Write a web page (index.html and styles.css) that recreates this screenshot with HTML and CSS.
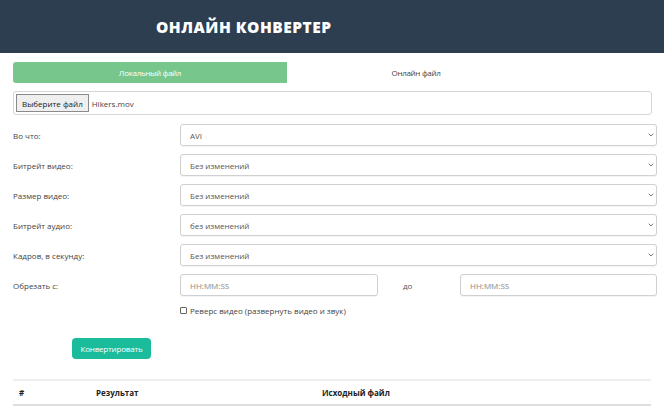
FILE: index.html
```html
<!DOCTYPE html>
<html lang="ru">
<head>
<meta charset="utf-8">
<title>Онлайн конвертер</title>
<link rel="stylesheet" href="styles.css">
</head>
<body>
<header class="top">
  <h1 class="title">ОНЛАЙН КОНВЕРТЕР</h1>
</header>
<main class="wrap">
  <div class="tabs">
    <div class="tab tab-active">Локальный файл</div>
    <div class="tab tab-online">Онлайн файл</div>
  </div>
  <div class="filebox">
    <span class="filebtn">Выберите файл</span>
    <span class="filename">Hikers.mov</span>
  </div>
  <div class="form">
    <div class="row">
      <label class="lbl">Во что:</label>
      <div class="selwrap"><select class="sel"><option>AVI</option></select><svg class="chev" viewBox="0 0 6 4" width="6" height="4"><path d="M0.7 0.7 L3 3 L5.3 0.7" fill="none" stroke="#777" stroke-width="1"/></svg></div>
    </div>
    <div class="row">
      <label class="lbl">Битрейт видео:</label>
      <div class="selwrap"><select class="sel"><option>Без изменений</option></select><svg class="chev" viewBox="0 0 6 4" width="6" height="4"><path d="M0.7 0.7 L3 3 L5.3 0.7" fill="none" stroke="#777" stroke-width="1"/></svg></div>
    </div>
    <div class="row">
      <label class="lbl">Размер видео:</label>
      <div class="selwrap"><select class="sel"><option>Без изменений</option></select><svg class="chev" viewBox="0 0 6 4" width="6" height="4"><path d="M0.7 0.7 L3 3 L5.3 0.7" fill="none" stroke="#777" stroke-width="1"/></svg></div>
    </div>
    <div class="row">
      <label class="lbl">Битрейт аудио:</label>
      <div class="selwrap"><select class="sel"><option>без изменений</option></select><svg class="chev" viewBox="0 0 6 4" width="6" height="4"><path d="M0.7 0.7 L3 3 L5.3 0.7" fill="none" stroke="#777" stroke-width="1"/></svg></div>
    </div>
    <div class="row">
      <label class="lbl">Кадров, в секунду:</label>
      <div class="selwrap"><select class="sel"><option>Без изменений</option></select><svg class="chev" viewBox="0 0 6 4" width="6" height="4"><path d="M0.7 0.7 L3 3 L5.3 0.7" fill="none" stroke="#777" stroke-width="1"/></svg></div>
    </div>
    <div class="row">
      <label class="lbl">Обрезать с:</label>
      <div class="times">
        <input class="inp inp-from" type="text" placeholder="HH:MM:SS">
        <span class="to">до</span>
        <input class="inp inp-to" type="text" placeholder="HH:MM:SS">
      </div>
    </div>
    <div class="row row-check">
      <span class="lbl"></span>
      <label class="check"><span class="box"></span>Реверс видео (развернуть видео и звук)</label>
    </div>
  </div>
  <div class="actions">
    <button class="btn">Конвертировать</button>
  </div>
  <table class="results">
    <thead>
      <tr><th class="c-num">#</th><th class="c-res">Результат</th><th class="c-src">Исходный файл</th></tr>
    </thead>
  </table>
</main>
</body>
</html>
```

FILE: styles.css
```css
* { box-sizing: border-box; }
html, body { margin: 0; padding: 0; background: #fff; }
body {
  font-family: "Open Sans", "Noto Sans", sans-serif;
  font-size: 8px;
  color: #333;
}
.top {
  background: #2c3e50;
  height: 53px;
  display: flex;
  align-items: center;
  padding-left: 156px;
}
.title {
  margin: 0;
  color: #fff;
  font-family: "Open Sans", sans-serif;
  font-weight: 800;
  font-size: 15.5px;
  letter-spacing: 0.5px;
}
.wrap {
  padding: 9px 7px 0 13px;
}
.tabs {
  display: flex;
  height: 21px;
  width: 638px;
}
.tab {
  display: flex;
  align-items: center;
  justify-content: center;
  font-size: 8px;
  color: #444;
  letter-spacing: -0.3px;
}
.tab-active {
  flex: 0 0 274px;
  background: #77c68b;
  color: #fff;
  border-radius: 3px 0 0 3px;
}
.tab-online { flex: 0 0 258px; }
.filebox {
  margin-top: 8px;
  width: 639px;
  height: 24px;
  border: 1px solid #d6d6d6;
  border-radius: 3px;
  display: flex;
  align-items: center;
  padding-left: 2px;
  gap: 3px;
}
.filebtn {
  border: 1px solid #8a8a8a;
  background: #efefef;
  height: 18px;
  padding: 0 5px;
  display: flex;
  align-items: center;
  color: #222;
  font-size: 8px;
}
.filename { color: #444; font-size: 8px; }
.form {
  margin-top: 9px;
  display: flex;
  flex-direction: column;
  gap: 8px;
}
.row {
  display: flex;
  align-items: center;
  height: 22px;
}
.lbl {
  width: 167px;
  flex: 0 0 167px;
  color: #444;
  font-size: 8px;
}
.selwrap {
  position: relative;
  width: 477px;
  height: 22px;
}
.sel {
  appearance: none;
  -webkit-appearance: none;
  width: 100%;
  height: 22px;
  border: 1px solid #d0d0d0;
  border-radius: 3px;
  background: #fff;
  font-family: "Open Sans", sans-serif;
  font-size: 8px;
  color: #555;
  padding: 0 0 0 9px;
  box-shadow: 0 1px 1px rgba(0,0,0,0.05);
}
.chev {
  position: absolute;
  right: 3px;
  top: 9px;
  pointer-events: none;
}
.times {
  display: flex;
  align-items: center;
  width: 477px;
}
.inp {
  height: 22px;
  border: 1px solid #d0d0d0;
  border-radius: 3px;
  font-family: "Open Sans", sans-serif;
  font-size: 8px;
  padding: 0 9px;
  box-shadow: 0 1px 1px rgba(0,0,0,0.05);
}
.inp::placeholder { color: #888; }
.inp-from { width: 198px; }
.inp-to { width: 197px; }
.to {
  width: 82px;
  padding-left: 25px;
  color: #555;
}
.row-check { height: 12px; }
.check {
  display: flex;
  align-items: center;
  gap: 3px;
  color: #444;
}
.box {
  width: 7px;
  height: 7px;
  border: 1px solid #666;
  border-radius: 1px;
  background: #fff;
}
.actions {
  margin-top: 22px;
  padding-left: 59px;
}
.btn {
  background: #1abc9c;
  color: #fff;
  border: none;
  border-radius: 4px;
  height: 21px;
  width: 79px;
  font-family: "Open Sans", sans-serif;
  font-size: 8px;
  letter-spacing: -0.2px;
  padding: 0;
}
.results {
  margin-top: 20px;
  width: 638px;
  border-collapse: collapse;
  border-top: 2px solid #eeeeee;
  border-bottom: 2px solid #dedede;
}
.results th {
  text-align: left;
  font-weight: 700;
  font-size: 8px;
  color: #222;
  height: 25px;
  padding: 0;
}
.c-num { width: 83px; padding-left: 6px !important; }
.c-res { width: 226px; }
```
